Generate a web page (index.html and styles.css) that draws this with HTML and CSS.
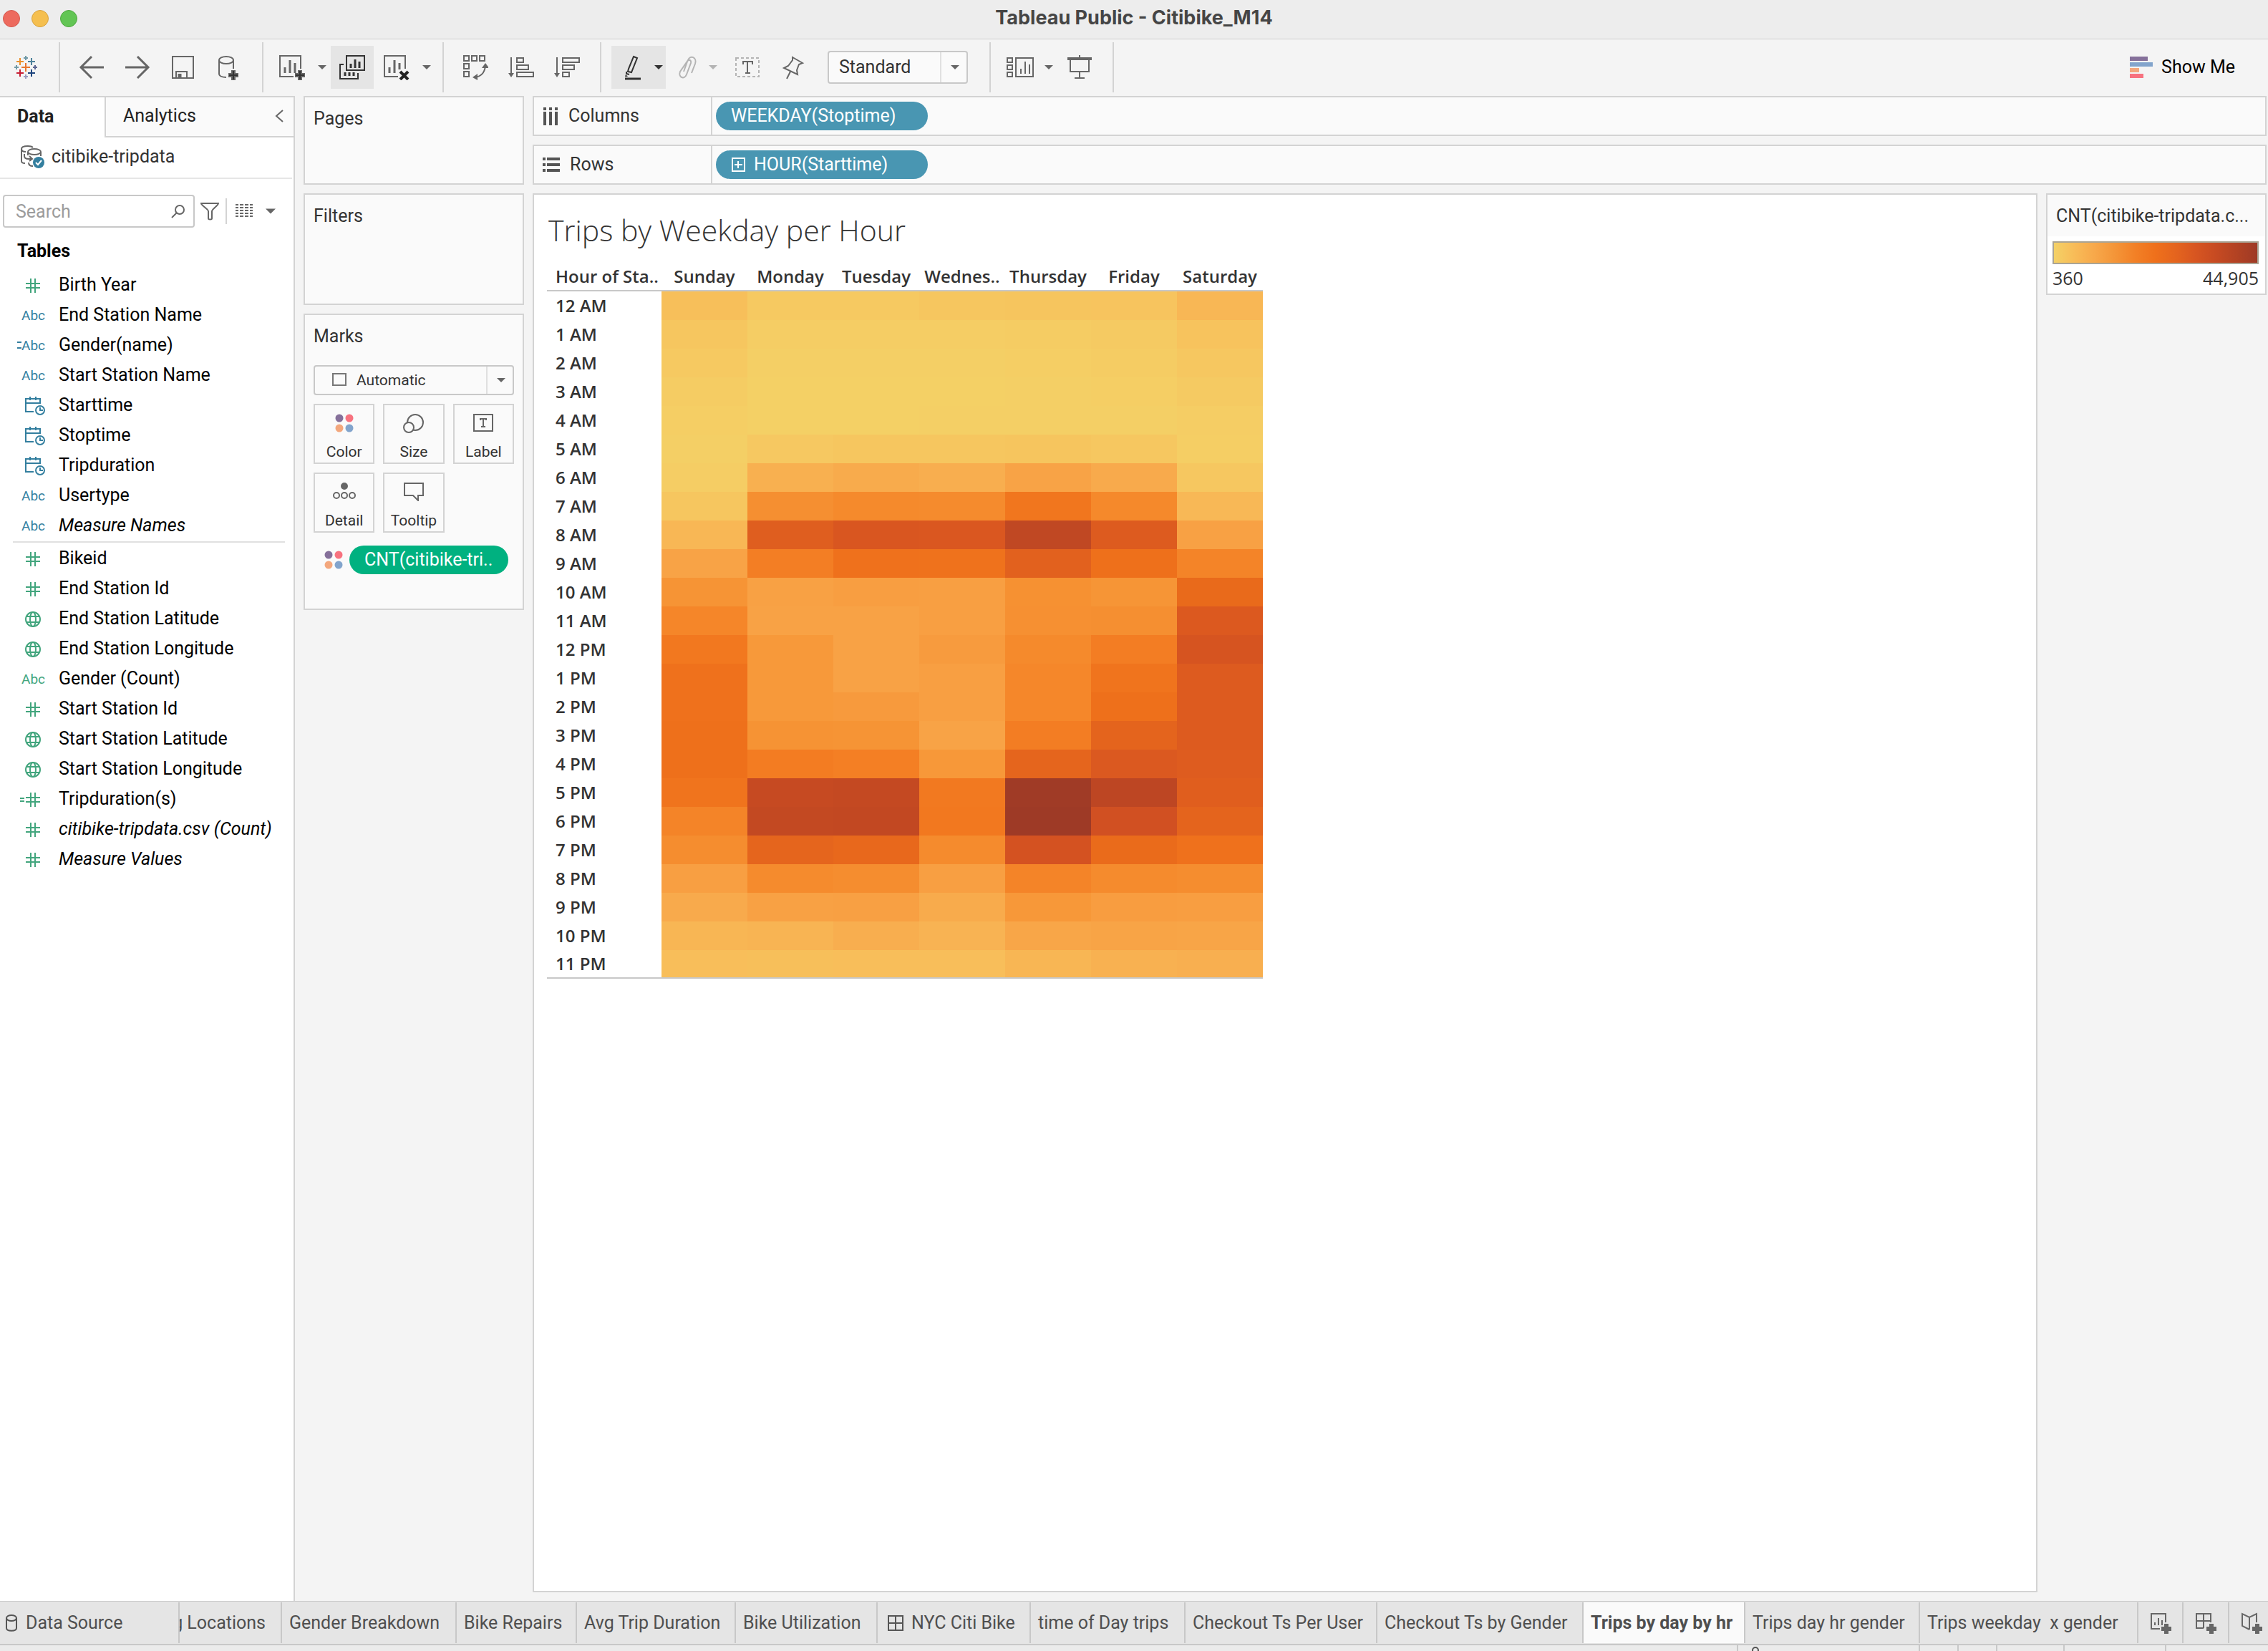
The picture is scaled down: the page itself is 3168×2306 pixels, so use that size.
FILE: index.html
```html
<!DOCTYPE html>
<html lang="en">
<head>
<meta charset="utf-8">
<title>Tableau Public - Citibike_M14</title>
<link rel="stylesheet" href="styles.css">
</head>
<body>
<svg class="defs" aria-hidden="true">
  <symbol id="caret" viewBox="0 0 12 8"><path d="M0 1h12L6 7z" fill="currentColor"/></symbol>
  <symbol id="plus" viewBox="0 0 14 14"><path d="M5 0h4v5h5v4H9v5H5V9H0V5h5z" fill="currentColor"/></symbol>
  <symbol id="hash" viewBox="0 0 34 28"><path d="M12 11h20M12 17h20M19 4v20M25 4v20" fill="none" stroke="currentColor" stroke-width="2"/></symbol>
  <symbol id="calc-hash" viewBox="0 0 34 28"><path d="M4 12h6M4 16h6M12 11h20M12 17h20M19 4v20M25 4v20" fill="none" stroke="currentColor" stroke-width="2"/></symbol>
  <symbol id="globe" viewBox="0 0 34 28"><g fill="none" stroke="currentColor" stroke-width="2"><circle cx="22" cy="14" r="10"/><ellipse cx="22" cy="14" rx="4" ry="10"/><path d="M13 10h18M13 18h18"/></g></symbol>
  <symbol id="datetime" viewBox="0 0 40 30"><g fill="none" stroke="currentColor" stroke-width="2"><path d="M23 23H12V5h20v6H12M18 2v5M26 2v5"/><circle cx="32" cy="21" r="6"/><path d="M32 17v4h4"/></g></symbol>
  <symbol id="dots" viewBox="0 0 26 26"><circle cx="6" cy="6" r="5.500" fill="#85709a"/><circle cx="20" cy="6" r="5.500" fill="#f7727f"/><circle cx="6" cy="20" r="5.500" fill="#f3a77d"/><circle cx="20" cy="20" r="5.500" fill="#82a4cc"/></symbol>
</svg>

<header class="titlebar">
  <div class="lights"><span class="light red"></span><span class="light yellow"></span><span class="light green"></span></div>
  <h1>Tableau Public - Citibike_M14</h1>
</header>

<div class="toolbar" role="toolbar" aria-label="Worksheet toolbar">
  <div class="group logo-group">
    <button class="tool narrow" aria-label="Start page">
      <svg width="34" height="34" viewBox="0 0 34 34" fill="none" stroke-width="2">
        <path d="M17 11v12M11 17h12" stroke="#e8762d"/>
        <path d="M9 4v10M4 9h10" stroke="#eb912c"/><path d="M25 4v10M20 9h10" stroke="#4f839b"/>
        <path d="M9 20v10M4 25h10" stroke="#c72035"/><path d="M25 20v10M20 25h10" stroke="#1f457e"/>
        <path d="M17 1v6M14 4h6" stroke="#7199a6"/><path d="M17 27v6M14 30h6" stroke="#9a9cc0"/>
        <path d="M4 14v6M1 17h6" stroke="#7199a6"/><path d="M30 14v6M27 17h6" stroke="#5c6692"/>
      </svg>
    </button>
  </div>
  <div class="group">
    <button class="tool" aria-label="Undo"><svg width="36" height="36" viewBox="0 0 36 36" fill="none" stroke="#666" stroke-width="3"><path d="M35 18H3M18 3L3 18l15 15"/></svg></button>
    <button class="tool" aria-label="Redo"><svg width="36" height="36" viewBox="0 0 36 36" fill="none" stroke="#666" stroke-width="3"><path d="M1 18h32M18 3l15 15-15 15"/></svg></button>
    <button class="tool" aria-label="Save"><svg width="36" height="36" viewBox="0 0 36 36" fill="none" stroke="#666" stroke-width="2"><path d="M4 3h28v30H3V3zM8 33v-9h15v9"/><path d="M13 27v6" stroke-width="5"/></svg></button>
    <button class="tool" aria-label="New data source"><svg width="36" height="36" viewBox="0 0 36 36" fill="none" stroke="#666" stroke-width="2"><ellipse cx="14" cy="8" rx="10" ry="5"/><path d="M4 8v19c0 3 4 5 10 5M24 8v12"/><use href="#plus" x="17" y="22" width="14" height="14" color="#333"/></svg></button>
  </div>
  <div class="group sheet-tools">
    <button class="tool split" aria-label="New worksheet"><svg width="40" height="36" viewBox="0 0 40 36" fill="none" stroke="#666" stroke-width="2"><path d="M22 31H3V2h29v18"/><path d="M10 18v8M17 8v18M24 12v14" stroke-width="3"/><use href="#plus" x="24" y="22" width="14" height="14" color="#333"/></svg><svg class="caret" width="12" height="8"><use href="#caret"/></svg></button>
    <button class="tool on" aria-label="Duplicate"><svg width="40" height="36" viewBox="0 0 40 36" fill="none" stroke="#333" stroke-width="2"><path d="M12 2h25v20H12zM8 14H3v20h25v-8"/><path d="M18 13v6M24 7v12M30 10v9M10 25v5M16 25v5M22 25v5" stroke-width="3"/></svg></button>
    <button class="tool split" aria-label="Clear sheet"><svg width="40" height="36" viewBox="0 0 40 36" fill="none" stroke="#666" stroke-width="2"><path d="M22 31H3V2h29v18"/><path d="M10 18v8M17 8v18M24 12v9" stroke-width="3"/><path d="M25 24l11 11M36 24L25 35" stroke="#222" stroke-width="4"/></svg><svg class="caret" width="12" height="8"><use href="#caret"/></svg></button>
  </div>
  <div class="group">
    <button class="tool" aria-label="Swap rows and columns"><svg width="36" height="36" viewBox="0 0 36 36" fill="none" stroke="#666" stroke-width="2"><path d="M2 2h7v7H2zM13 2h7v7h-7zM24 2h7v7h-7zM2 13h7v7H2zM2 24h7v7H2z"/><path d="M17 32c9-1 14-7 15-16"/><path d="M27 19l5-7 5 7zM21 27v9l-7-4z" fill="#666" stroke="none"/></svg></button>
    <button class="tool" aria-label="Sort ascending"><svg width="36" height="36" viewBox="0 0 36 36" fill="none" stroke="#666" stroke-width="2"><path d="M4 4v24M12 5h9v6h-9zM12 15h16v6H12zM12 25h23v6H12z"/><path d="M0 26h8l-4 6z" fill="#666" stroke="none"/></svg></button>
    <button class="tool" aria-label="Sort descending"><svg width="36" height="36" viewBox="0 0 36 36" fill="none" stroke="#666" stroke-width="2"><path d="M4 4v24M12 5h23v6H12zM12 15h16v6H12zM12 25h9v6h-9z"/><path d="M0 26h8l-4 6z" fill="#666" stroke="none"/></svg></button>
  </div>
  <div class="group mark-tools">
    <button class="tool split on" aria-label="Highlight"><svg width="28" height="36" viewBox="0 0 28 36" fill="none" stroke="#333" stroke-width="2"><path d="M15 3l5 2-8 20-5-1 1-4zM5 24v3l4 1"/><path d="M4 28l-1 3h4z" fill="#333" stroke="none"/><path d="M3 34h22" stroke-width="3"/></svg><svg class="caret dark" width="12" height="8"><use href="#caret"/></svg></button>
    <button class="tool split" aria-label="Group members"><svg width="28" height="36" viewBox="0 0 28 36" fill="none" stroke="#b4b4b4" stroke-width="2"><path d="M20 26l5-13c3-9-7-13-10-5L4 24c-3 8 6 12 9 4l6-16c1-5-4-5-5-2L9 24"/></svg><svg class="caret light-caret" width="12" height="8"><use href="#caret"/></svg></button>
    <button class="tool" aria-label="Show mark labels"><svg width="36" height="36" viewBox="0 0 36 36" fill="none"><rect x="2" y="5" width="32" height="26" stroke="#b4b4b4" stroke-width="2" stroke-dasharray="4 3"/><path d="M12 14v-4h13v4M18 10v16M15 26h7" stroke="#666" stroke-width="2"/></svg></button>
    <button class="tool" aria-label="Fix axes"><svg width="36" height="36" viewBox="0 0 36 36" fill="none" stroke="#666" stroke-width="2"><path d="M17 4l14 8-5 2-3 8 1 6-19-9 6-3 6-8zM14 24L9 34"/></svg></button>
    <div class="dropdown fit"><select aria-label="Fit"><option>Standard</option><option>Entire View</option></select><svg class="caret" width="12" height="8"><use href="#caret"/></svg></div>
  </div>
  <div class="group view-tools">
    <button class="tool split" aria-label="Show cards"><svg width="40" height="36" viewBox="0 0 40 36" fill="none" stroke="#666" stroke-width="2"><path d="M2 5h7v6H2zM2 15h7v6H2zM2 25h7v6H2zM14 5h24v26H14z"/><path d="M21 20v7M27 10v17M33 14v13" stroke-width="2"/></svg><svg class="caret" width="12" height="8"><use href="#caret"/></svg></button>
    <button class="tool" aria-label="Presentation mode"><svg width="36" height="36" viewBox="0 0 36 36" fill="none" stroke="#666" stroke-width="2"><path d="M1 6h34" stroke-width="4"/><path d="M18 1v4M5 7v17h26V7M18 24v8M11 33h14"/></svg></button>
  </div>
  <button class="show-me"><svg width="32" height="30" viewBox="0 0 32 30"><path d="M0 0h25v6H0z" fill="#85709a"/><path d="M0 8h32v6H0z" fill="#82a4cc"/><path d="M0 16h13v6H0z" fill="#f3a77d"/><path d="M0 24h19v6H0z" fill="#f7727f"/></svg>Show Me</button>
</div>

<div class="workspace">
  <aside class="data-pane">
    <div class="pane-tabs" role="tablist">
      <button class="pane-tab active" role="tab" aria-selected="true">Data</button>
      <button class="pane-tab" role="tab" aria-selected="false">Analytics
        <svg width="12" height="20" viewBox="0 0 12 20" fill="none" stroke="#666" stroke-width="2"><path d="M11 2L2 10l9 8"/></svg></button>
    </div>
    <div class="source">
      <svg width="34" height="34" viewBox="0 0 34 34" fill="none" stroke="#666" stroke-width="2"><path d="M18 4c-2-2-5-2-7-2-5 0-9 1-9 4v17c0 2 2 3 5 3M2 6c0 2 2 4 6 4"/><ellipse cx="20" cy="10" rx="9" ry="4"/><path d="M11 10v5M29 10v6M6 13v3c0 3 3 4 6 4h5M13 16l4 4-4 3M12 25c0 3 2 5 6 5"/><circle cx="26" cy="25" r="8" fill="#347f9f" stroke="none"/><path d="M22 25l3 3 5-6" stroke="#fff"/></svg>
      citibike-tripdata
    </div>
    <div class="search-row">
      <div class="search"><input type="search" placeholder="Search" aria-label="Search fields">
        <svg width="20" height="20" viewBox="0 0 20 20" fill="none" stroke="#666" stroke-width="2"><circle cx="12" cy="8" r="6"/><path d="M8 12l-7 7"/></svg></div>
      <button class="plain" aria-label="Filter fields"><svg width="28" height="28" viewBox="0 0 28 28" fill="none" stroke="#666" stroke-width="2"><path d="M2 3h24c0 3-9 8-9 11v10c0 2-5 2-5 0V14C12 11 2 6 2 3z"/></svg></button>
      <span class="tick"></span>
      <button class="plain list-view" aria-label="View as list"><svg width="24" height="20" viewBox="0 0 24 20" fill="none" stroke="#666" stroke-width="2"><path d="M0 1h24M0 5h24M0 9h24M0 13h24M0 17h24" stroke-dasharray="4 2 5 2 5 2 4 9"/></svg><svg class="caret" width="14" height="10"><use href="#caret"/></svg></button>
    </div>
    <h2>Tables</h2>
    <ul class="fields dimensions">
      <li class="measure"><span class="kind"><svg width="34" height="28"><use href="#hash"/></svg></span>Birth Year</li>
      <li><span class="kind abc">Abc</span>End Station Name</li>
      <li><span class="kind abc calc">Abc</span>Gender(name)</li>
      <li><span class="kind abc">Abc</span>Start Station Name</li>
      <li><span class="kind"><svg width="40" height="30"><use href="#datetime"/></svg></span>Starttime</li>
      <li><span class="kind"><svg width="40" height="30"><use href="#datetime"/></svg></span>Stoptime</li>
      <li><span class="kind"><svg width="40" height="30"><use href="#datetime"/></svg></span>Tripduration</li>
      <li><span class="kind abc">Abc</span>Usertype</li>
      <li><span class="kind abc">Abc</span><em>Measure Names</em></li>
    </ul>
    <ul class="fields measures">
      <li class="measure"><span class="kind"><svg width="34" height="28"><use href="#hash"/></svg></span>Bikeid</li>
      <li class="measure"><span class="kind"><svg width="34" height="28"><use href="#hash"/></svg></span>End Station Id</li>
      <li class="measure"><span class="kind"><svg width="34" height="28"><use href="#globe"/></svg></span>End Station Latitude</li>
      <li class="measure"><span class="kind"><svg width="34" height="28"><use href="#globe"/></svg></span>End Station Longitude</li>
      <li class="measure"><span class="kind abc">Abc</span>Gender (Count)</li>
      <li class="measure"><span class="kind"><svg width="34" height="28"><use href="#hash"/></svg></span>Start Station Id</li>
      <li class="measure"><span class="kind"><svg width="34" height="28"><use href="#globe"/></svg></span>Start Station Latitude</li>
      <li class="measure"><span class="kind"><svg width="34" height="28"><use href="#globe"/></svg></span>Start Station Longitude</li>
      <li class="measure"><span class="kind"><svg width="34" height="28"><use href="#calc-hash"/></svg></span>Tripduration(s)</li>
      <li class="measure"><span class="kind"><svg width="34" height="28"><use href="#hash"/></svg></span><em>citibike-tripdata.csv (Count)</em></li>
      <li class="measure"><span class="kind"><svg width="34" height="28"><use href="#hash"/></svg></span><em>Measure Values</em></li>
    </ul>
  </aside>

  <div class="cards">
    <section class="card pages"><h2>Pages</h2></section>
    <section class="card filters"><h2>Filters</h2></section>
    <section class="card marks">
      <h2>Marks</h2>
      <div class="dropdown mark-type"><select aria-label="Mark type"><option>Automatic</option><option>Square</option></select><svg class="shape" width="20" height="20" viewBox="0 0 20 20"><path d="M1 2h18v16H1z" fill="none" stroke="#777" stroke-width="2"/></svg><svg class="caret" width="12" height="8"><use href="#caret"/></svg></div>
      <div class="mark-buttons">
        <button><svg width="26" height="26"><use href="#dots"/></svg>Color</button>
        <button><svg width="30" height="28" viewBox="0 0 30 28" fill="#fafafa" stroke="#666" stroke-width="2"><circle cx="17" cy="12" r="11"/><circle cx="8" cy="19" r="7"/></svg>Size</button>
        <button><svg width="28" height="26" viewBox="0 0 28 26" fill="none" stroke="#666" stroke-width="2"><path d="M1 1h26v23H1z"/><path d="M10 9V7h8v2M14 7v11M11 18h6"/></svg>Label</button>
        <button><svg width="32" height="24" viewBox="0 0 32 24" fill="none" stroke="#666" stroke-width="2"><circle cx="16" cy="5" r="4" fill="#666"/><circle cx="5" cy="18" r="4"/><circle cx="16" cy="18" r="4"/><circle cx="27" cy="18" r="4"/></svg>Detail</button>
        <button><svg width="28" height="26" viewBox="0 0 28 26" fill="none" stroke="#666" stroke-width="2"><path d="M1 1h26v17h-7v7l-7-7H1z"/></svg>Tooltip</button>
      </div>
      <div class="encoding"><svg width="26" height="26"><use href="#dots"/></svg><button class="pill green-pill">CNT(citibike-tri..</button></div>
    </section>
  </div>

  <main>
    <section class="shelf">
      <h2><svg width="24" height="26" viewBox="0 0 24 26" stroke="#555" stroke-width="4"><path d="M3 1v4M11 1v4M19 1v4M3 7v19M11 7v19M19 7v19"/></svg>Columns</h2>
      <div class="drop"><button class="pill">WEEKDAY(Stoptime)</button></div>
    </section>
    <section class="shelf">
      <h2><svg width="26" height="22" viewBox="0 0 26 22" stroke="#555" stroke-width="4"><path d="M0 3h4M6 3h18M0 11h4M6 11h18M0 19h4M6 19h18"/></svg>Rows</h2>
      <div class="drop"><button class="pill"><svg width="20" height="20" viewBox="0 0 20 20" fill="none" stroke="#fff" stroke-width="2"><path d="M2 1h17v18H2zM10 5v10M5 10h11"/></svg>HOUR(Starttime)</button></div>
    </section>
    <div class="canvas">
      <section class="view">
        <h2>Trips by Weekday per Hour</h2>
        <table>
          <thead><tr><th scope="col" class="corner">Hour of Sta..</th><th scope="col">Sunday</th><th scope="col">Monday</th><th scope="col">Tuesday</th><th scope="col">Wednes..</th><th scope="col">Thursday</th><th scope="col">Friday</th><th scope="col">Saturday</th></tr></thead>
          <tbody id="hours"></tbody>
        </table>
      </section>
      <aside class="legend">
        <h2>CNT(citibike-tripdata.c...</h2>
        <div class="legend-body"><div class="ramp"></div><div class="range"><span>360</span><span>44,905</span></div></div>
      </aside>
    </div>
  </main>
</div>

<nav class="sheets" aria-label="Sheets">
  <button class="sheet source-tab"><svg width="18" height="24" viewBox="0 0 18 24" fill="none" stroke="#555" stroke-width="2"><ellipse cx="9" cy="5" rx="7" ry="4"/><path d="M2 5v14c0 5 14 5 14 0V5"/></svg>Data Source</button>
  <button class="sheet scrolled">g Locations</button>
  <button class="sheet">Gender Breakdown</button>
  <button class="sheet">Bike Repairs</button>
  <button class="sheet">Avg Trip Duration</button>
  <button class="sheet">Bike Utilization</button>
  <button class="sheet dash"><svg width="22" height="22" viewBox="0 0 22 22" fill="none" stroke="#555" stroke-width="2"><path d="M1 1h20v20H1zM11 1v20M1 11h20"/></svg>NYC Citi Bike</button>
  <button class="sheet">time of Day trips</button>
  <button class="sheet">Checkout Ts Per User</button>
  <button class="sheet">Checkout Ts by Gender</button>
  <button class="sheet current">Trips by day by hr</button>
  <button class="sheet">Trips day hr gender</button>
  <button class="sheet">Trips weekday&nbsp; x gender</button>
  <button class="sheet add" aria-label="New worksheet"><svg width="30" height="30" viewBox="0 0 30 30" fill="none" stroke="#666" stroke-width="2"><path d="M14 23H2V2h20v12M7 14v4M12 8v10M17 11v7"/><use href="#plus" x="16" y="16" width="14" height="14" color="#666"/></svg></button>
  <button class="sheet add" aria-label="New dashboard"><svg width="30" height="30" viewBox="0 0 30 30" fill="none" stroke="#666" stroke-width="2"><path d="M12 22H2V2h20v12M12 2v20M2 12h20"/><use href="#plus" x="16" y="16" width="14" height="14" color="#666"/></svg></button>
  <button class="sheet add" aria-label="New story"><svg width="30" height="30" viewBox="0 0 30 30" fill="none" stroke="#666" stroke-width="2"><path d="M12 24L2 19V2l10 5 10-5v12M12 7v17"/><use href="#plus" x="16" y="16" width="14" height="14" color="#666"/></svg></button>
</nav>
<footer class="status"><span></span><span><svg width="10" height="8" viewBox="0 0 10 8" fill="none" stroke="#555" stroke-width="2"><circle cx="5" cy="7" r="4"/></svg></span><span></span><span></span><span></span><span></span><span></span></footer>
<script src="heatmap.js"></script>
</body>
</html>
```
FILE: styles.css
```css
* { box-sizing: border-box; }

body {
  margin: 0;
  min-height: 100vh;
  display: flex;
  flex-direction: column;
  background: #f4f4f4;
  color: #333;
  font: 25px/30px Roboto, "Liberation Sans", sans-serif;
}

h1, h2, ul { margin: 0; padding: 0; font: inherit; list-style: none; }
button, select, input { font: inherit; color: inherit; }
button { margin: 0; padding: 0; border: 0; background: none; }
svg { flex: none; display: block; }

.defs { position: absolute; width: 0; height: 0; }
.caret { color: #666; }
.caret.dark { color: #333; }
.caret.light-caret { color: #b4b4b4; }

/* Window title */
.titlebar {
  display: grid;
  grid-template-columns: 1fr auto 1fr;
  align-items: center;
  height: 55px;
  border-bottom: 1px solid #cfcfcf;
  background: #ededed;
}
.titlebar h1 { font: 700 27px/32px Inter, sans-serif; color: #454545; padding-bottom: 4px; }
.lights { display: flex; gap: 16px; padding-left: 4px; padding-bottom: 2px; }
.light { width: 24px; height: 24px; border-radius: 50%; border: 1px solid; }
.red { background: #ed6a5e; border-color: #d45a50; }
.yellow { background: #f5bf4f; border-color: #d8a33f; }
.green { background: #62c554; border-color: #50a842; }

/* Toolbar */
.toolbar { display: flex; align-items: center; height: 79px; padding-bottom: 1px; }
.group {
  display: flex;
  align-items: center;
  height: 70px;
  padding: 0 14px 0 12px;
  border-right: 2px solid #d3d3d3;
}
.logo-group { padding: 0 28px 0 18px; }
.sheet-tools { gap: 2px; padding: 0 12px 0 10px; }
.mark-tools { padding-left: 14px; }
.view-tools { padding-left: 10px; }
.tool { display: flex; align-items: center; justify-content: center; width: 64px; height: 60px; }
.tool.narrow { width: 36px; }
.tool.on { width: 60px; background: #e5e5e5; }
.tool.split { width: 82px; gap: 16px; padding-left: 6px; }
.tool.split.on { width: 76px; padding-left: 12px; }
.view-tools .split { gap: 14px; }
.dropdown { position: relative; display: block; }
.dropdown select {
  appearance: none;
  display: block;
  width: 100%;
  height: 100%;
  padding: 0 0 0 14px;
  border: 2px solid #c8c8c8;
  border-radius: 4px;
  background: linear-gradient(#e0e0e0, #e0e0e0) right 35px top 0 / 2px 100% no-repeat #fafafa;
}
.dropdown .caret { position: absolute; right: 12px; top: 50%; margin-top: -4px; }
.fit { width: 196px; height: 46px; margin: 0 16px; }
.show-me { display: flex; align-items: center; gap: 12px; margin-left: auto; margin-right: 46px; color: #000; }

/* Workspace */
.workspace { flex: 1; display: flex; align-items: stretch; }

.data-pane {
  width: 412px;
  border: 2px solid #d3d3d3;
  border-width: 2px 2px 0 0;
  background: #fff;
}
.pane-tabs { display: flex; height: 56px; }
.pane-tab {
  flex: 1;
  display: flex;
  justify-content: space-between;
  align-items: center;
  padding: 0 14px 2px 24px;
  border: 2px solid #d3d3d3;
  border-width: 0 0 2px 2px;
  background: #fafafa;
  text-align: left;
  color: #222;
}
.pane-tab.active { flex: none; width: 146px; border: 0; background: #fff; font-weight: 700; }
.source {
  display: flex;
  align-items: center;
  gap: 10px;
  height: 58px;
  margin-right: 2px;
  padding: 0 0 2px 28px;
  border-bottom: 2px solid #e6e6e6;
}
.search-row { display: flex; align-items: center; padding: 22px 0 0 4px; }
.search { position: relative; width: 268px; height: 46px; }
.search input {
  width: 100%;
  height: 100%;
  padding: 0 44px 0 16px;
  border: 2px solid #c8c8c8;
  border-radius: 4px;
  background: #fff;
}
.search input::placeholder { color: #9c9c9c; }
.search svg { position: absolute; right: 13px; top: 13px; }
.plain { display: flex; align-items: center; }
.search-row > .plain { margin-left: 7px; }
.tick { width: 2px; height: 36px; margin-left: 8px; background: #d3d3d3; }
.search-row > .list-view { margin-left: 12px; gap: 18px; }

.data-pane > h2 { padding: 18px 0 10px 24px; font-weight: 700; color: #000; }
.fields { color: #000; }
.fields li { display: flex; align-items: center; height: 42px; padding-top: 2px; }
.measures { margin-top: 2px; }
.measures::before { content: ""; display: block; height: 2px; margin: 0 12px 0 18px; background: #e0e0e0; }
.kind { width: 82px; padding-left: 24px; padding-top: 2px; color: #347f9f; }
.measure .kind { color: #42a57d; }
.abc { padding-left: 30px; font: 19px/24px Roboto, sans-serif; }
.abc.calc { padding-left: 24px; }
.abc.calc::before {
  content: "";
  display: inline-block;
  width: 6px;
  height: 6px;
  margin-bottom: 2px;
  border: solid;
  border-width: 2px 0;
}

/* Cards */
.cards { display: flex; flex-direction: column; gap: 12px; width: 308px; margin-left: 12px; }
.card { padding: 15px 12px 0; border: 2px solid #d3d3d3; background: #fafafa; }
.pages { height: 124px; }
.filters { height: 156px; }
.marks { padding-bottom: 48px; }
.mark-type { height: 42px; margin-top: 25px; font-size: 21px; }
.mark-type select { padding-left: 58px; }
.mark-type .shape { position: absolute; left: 26px; top: 10px; }
.mark-buttons { display: grid; grid-template-columns: repeat(3, 1fr); gap: 12px; margin-top: 12px; font-size: 21px; }
.mark-buttons button {
  display: flex;
  flex-direction: column;
  align-items: center;
  justify-content: space-between;
  height: 84px;
  padding: 12px 0 0;
  border: 2px solid #d3d3d3;
}
.encoding { display: flex; align-items: center; gap: 9px; margin: 18px 8px 0 15px; }
.pill { display: flex; align-items: center; gap: 12px; height: 40px; padding: 0 21px; border-radius: 20px; background: #4996b2; color: #fff; }
.green-pill { flex: 1; background: #00b180; white-space: nowrap; }

/* Shelves and view */
main { flex: 1; display: flex; flex-direction: column; gap: 12px; min-width: 0; margin: 0 2px 12px 12px; }
.shelf { display: flex; height: 56px; border: 2px solid #d3d3d3; background: #fafafa; }
.shelf h2 { display: flex; align-items: center; gap: 12px; width: 249px; padding-left: 12px; border-right: 2px solid #d3d3d3; }
.drop { display: flex; align-items: center; padding-left: 5px; }
.drop .pill { width: 296px; }
.canvas { flex: 1; display: flex; align-items: flex-start; gap: 12px; }
.view { flex: 1; align-self: stretch; padding: 22px 18px; border: 2px solid #d3d3d3; background: #fff; font-family: "Open Sans", "Noto Sans", sans-serif; }
.view h2 { padding-left: 2px; font-size: 41px; line-height: 54px; font-weight: 300; }
.view table { margin-top: 19px; border-collapse: separate; border-spacing: 0; table-layout: fixed; width: 1000px; }
.view th { width: 120px; height: 40px; padding: 0; font-size: 24px; line-height: 30px; font-weight: 600; white-space: nowrap; color: #333; }
.view thead th { border-bottom: 2px solid #c8c8c8; }
.view .corner, .view tbody th { width: 160px; padding-left: 12px; text-align: left; }
.view tbody th { padding-bottom: 1px; }
.view td { padding: 0; }
.view tbody tr:last-child > * { border-bottom: 2px solid #c8c8c8; }

.legend { width: 308px; border: 2px solid #d3d3d3; background: #fff; }
.legend h2 { padding: 15px 12px 13px; background: #fafafa; white-space: nowrap; }
.legend-body { padding: 7px 9px 7px 7px; }
.ramp {
  height: 32px;
  border: 2px solid #aaa494;
  background: linear-gradient(90deg, #f4d166, #f8bc58, #f7a84a, #f49538, #f28026, #ef701b, #e4641e, #d75521, #c64a22, #b24223, #9e3a26);
}
.range { display: flex; justify-content: space-between; padding-top: 4px; font-family: "Open Sans", "Noto Sans", sans-serif; }

/* Sheet tabs */
.sheets {
  display: grid;
  grid-template-columns: 249fr 143fr 244fr 168fr 222fr 198fr 214fr 216fr 268fr 288fr 226fr 244fr 305fr 63fr 64fr 56fr;
  height: 62px;
  padding: 1px 0;
  border: solid #c8c8c8;
  border-width: 1px 0 2px;
  background: #e5e5e5;
  color: #4f4f4f;
}
.sheet { display: flex; align-items: center; min-width: 0; padding-left: 10px; border-left: 2px solid #c8c8c8; overflow: hidden; white-space: nowrap; }
.source-tab { border: 0; padding-left: 7px; gap: 11px; }
.scrolled { justify-content: flex-end; padding: 0 21px 0 0; }
.dash { padding-left: 14px; gap: 11px; }
.current { background: #fafafa; font-weight: 700; }
.add { padding: 0 0 0 16px; }

.status {
  display: grid;
  grid-template-columns: 2428fr 254fr 54fr 54fr 94fr 142fr 142fr;
  height: 8px;
  background: #ebebeb;
  overflow: hidden;
}
.status span { height: 8px; border-right: 2px solid #c8c8c8; padding-left: 19px; overflow: hidden; }
.status span:last-child { border: 0; }
```
FILE: heatmap.js
```js
// Trip density per hour (rows) and weekday Sunday..Saturday (columns), on a 0-190 scale.
const density = [
  [17, 8, 8, 11, 12, 13, 25],
  [11, 4, 4, 4, 5, 7, 14],
  [8, 2, 2, 2, 3, 5, 10],
  [5, 1, 1, 1, 2, 3, 7],
  [3, 1, 1, 2, 2, 2, 4],
  [2, 9, 11, 11, 12, 10, 3],
  [4, 32, 37, 34, 45, 38, 10],
  [11, 66, 71, 70, 90, 72, 24],
  [25, 118, 128, 127, 156, 121, 47],
  [45, 82, 96, 95, 114, 98, 76],
  [61, 47, 50, 49, 64, 60, 104],
  [75, 46, 46, 49, 65, 66, 124],
  [88, 56, 46, 53, 71, 83, 132],
  [96, 56, 46, 49, 74, 92, 121],
  [96, 56, 54, 49, 74, 98, 121],
  [98, 62, 61, 45, 83, 110, 121],
  [98, 84, 81, 57, 109, 125, 120],
  [92, 150, 152, 87, 188, 159, 117],
  [76, 153, 154, 88, 190, 138, 110],
  [68, 109, 106, 70, 135, 103, 96],
  [49, 70, 68, 49, 76, 70, 68],
  [38, 47, 48, 37, 57, 51, 50],
  [26, 28, 34, 29, 42, 44, 43],
  [18, 17, 18, 18, 26, 31, 33]
];

// Orange-gold ramp, one stop for every ten steps of density.
const ramp = ["f4d166", "f6c760", "f8bc58", "f8b252", "f8a84a", "f89e41", "f69536", "f58b2d", "f48025", "f1761e",
  "ed6e1a", "e4641d", "de5c1f", "d85520", "cf4f22", "c64a22", "bc4623", "b24223", "a83e24", "9e3a26"]
  .map(hex => [0, 2, 4].map(i => parseInt(hex.slice(i, i + 2), 16)));

function colour(value) {
  const low = Math.min(Math.floor(value / 10), ramp.length - 2);
  const part = value / 10 - low;
  return "rgb(" + ramp[low].map((c, i) => Math.round(c + (ramp[low + 1][i] - c) * part)).join(",") + ")";
}

const body = document.getElementById("hours");
density.forEach((row, hour) => {
  const tr = body.insertRow();
  const th = document.createElement("th");
  th.scope = "row";
  th.textContent = (hour % 12 || 12) + (hour < 12 ? " AM" : " PM");
  tr.append(th);
  row.forEach(value => { tr.insertCell().style.backgroundColor = colour(value); });
});
```
